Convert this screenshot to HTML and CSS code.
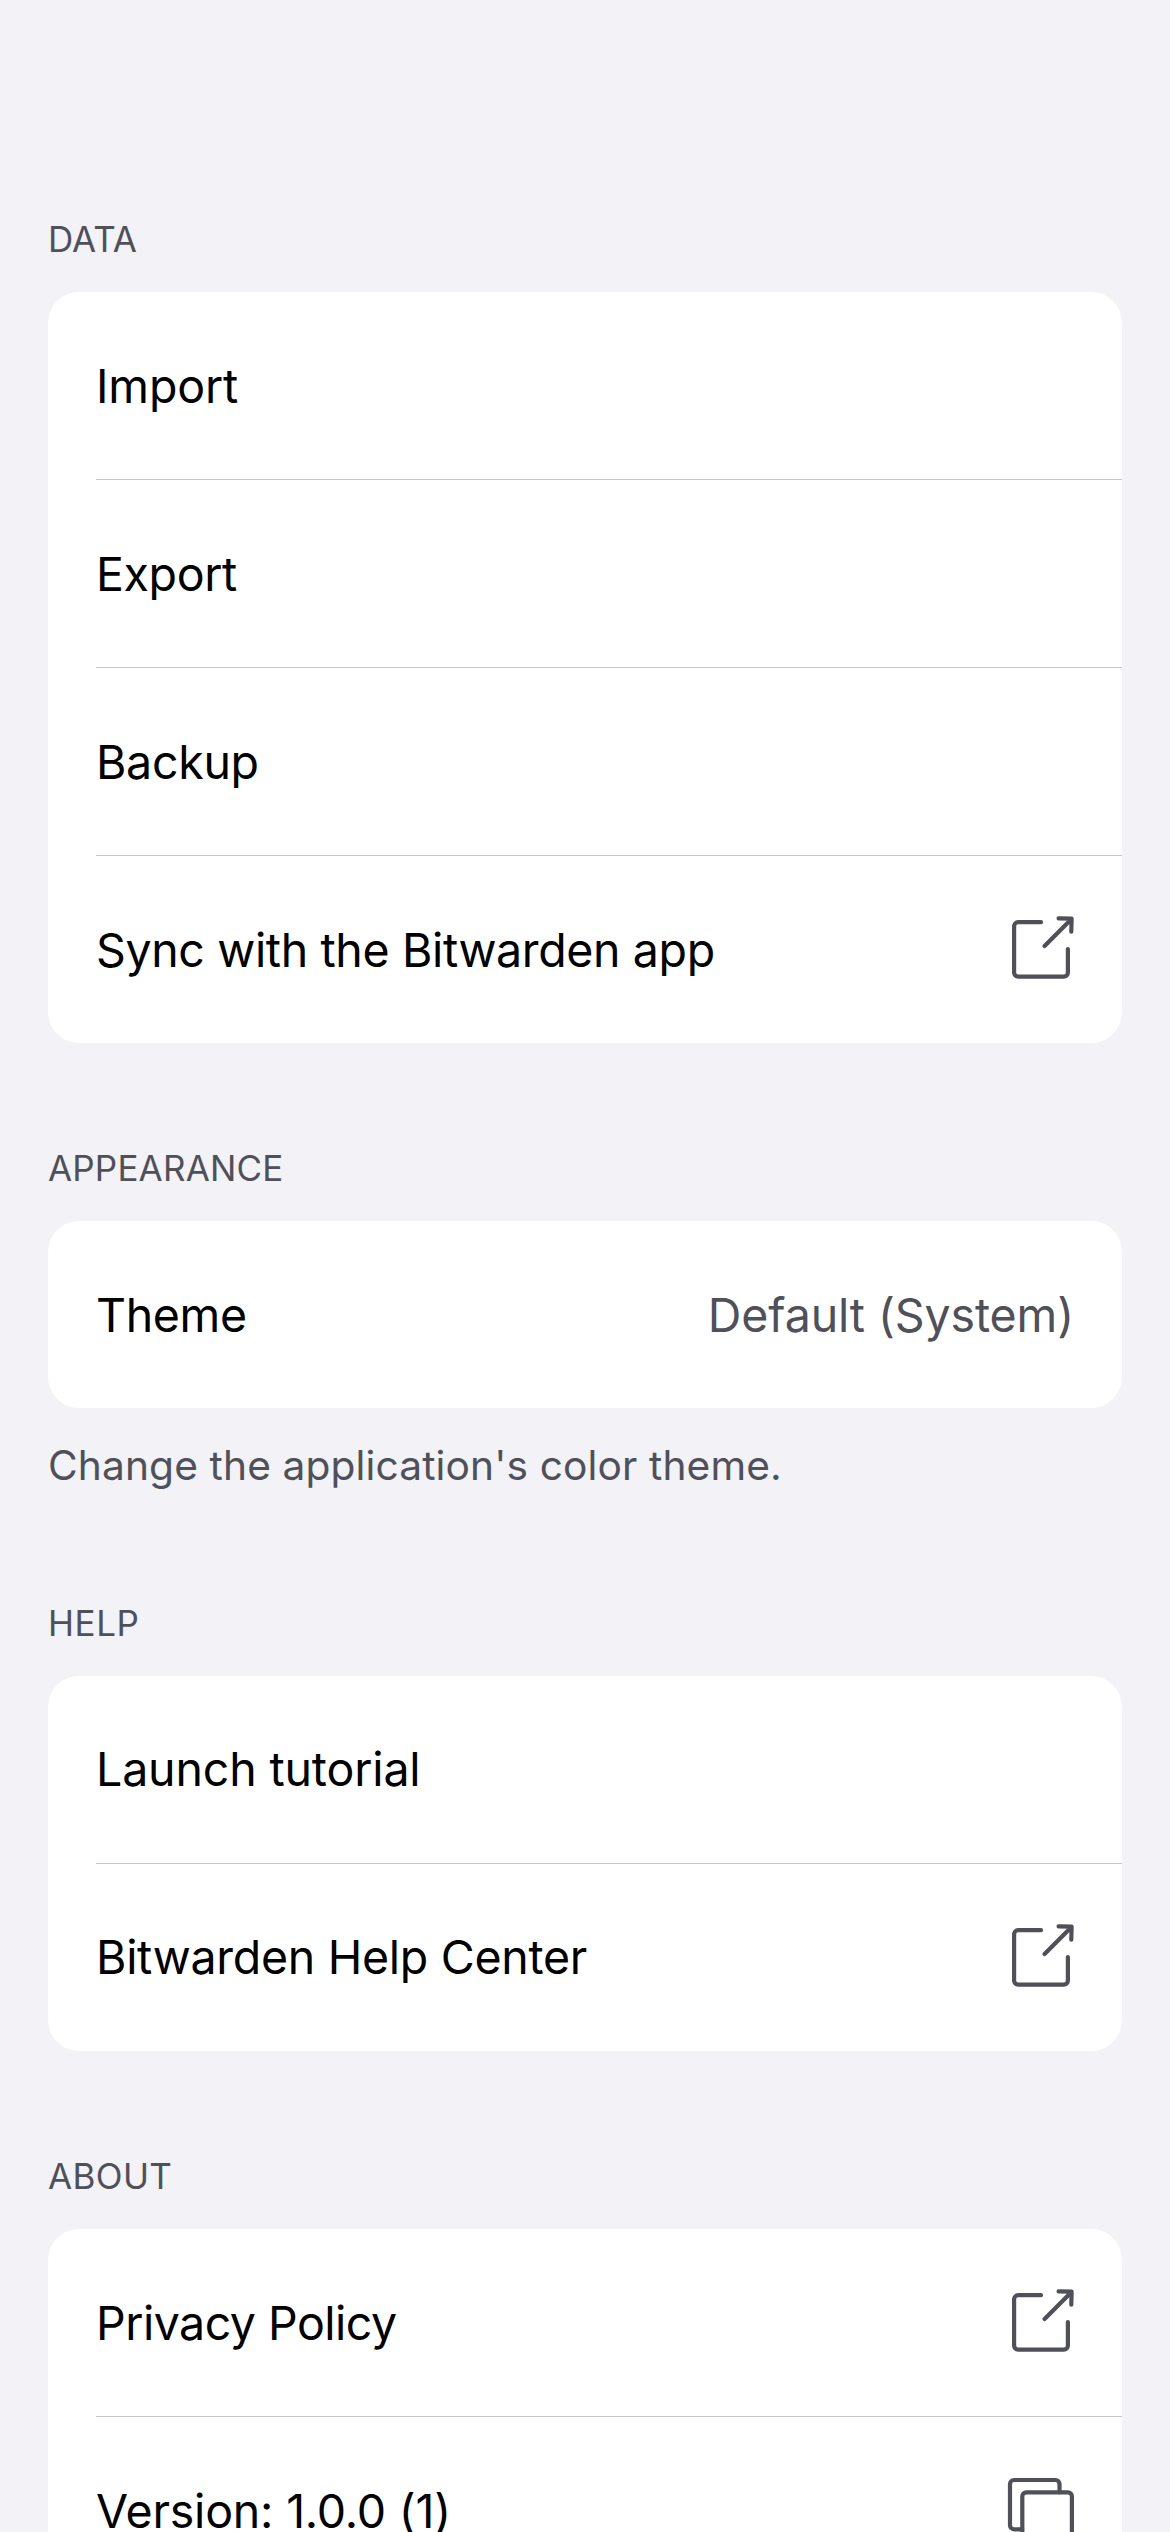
FILE: index.html
```html
<!DOCTYPE html>
<html lang="en">
<head>
<meta charset="utf-8">
<title>Settings</title>
<link rel="stylesheet" href="styles.css">
</head>
<body>
<svg class="defs" width="0" height="0" aria-hidden="true">
  <symbol id="external" viewBox="0 0 64 65" overflow="visible"><path d="M31 5.2H8.1a4 4 0 0 0-4 4v46.4a4 4 0 0 0 4 4h45.8a4 4 0 0 0 4-4V32M34.6 29 60.5 3M48.6 1.4 61.6 1.7 61.3 14.7"/></symbol>
  <symbol id="copy" viewBox="0 0 66 65" overflow="visible"><rect x="14.3" y="14.3" width="49.6" height="49.6" rx="4"/><path d="M14.3 51.3H6a4 4 0 0 1-4-4V6a4 4 0 0 1 4-4h41.5a4 4 0 0 1 4 4v8.3"/></symbol>
</svg>
<main class="settings">
  <section class="group">
    <h2 class="heading t-data">DATA</h2>
    <div class="card">
      <div class="row"><span class="t-import">Import</span></div>
      <div class="row"><span class="t-export">Export</span></div>
      <div class="row"><span class="t-backup">Backup</span></div>
      <div class="row"><span class="t-sync">Sync with the Bitwarden app</span><svg class="icon external"><use href="#external"/></svg></div>
    </div>
  </section>
  <section class="group">
    <h2 class="heading t-appearance">APPEARANCE</h2>
    <div class="card">
      <div class="row"><span class="t-theme">Theme</span><span class="value">Default (System)</span></div>
    </div>
    <p class="note">Change the application's color theme.</p>
  </section>
  <section class="group help">
    <h2 class="heading t-help">HELP</h2>
    <div class="card">
      <div class="row"><span class="t-launch">Launch tutorial</span></div>
      <div class="row"><span class="t-center">Bitwarden Help Center</span><svg class="icon external"><use href="#external"/></svg></div>
    </div>
  </section>
  <section class="group">
    <h2 class="heading t-about">ABOUT</h2>
    <div class="card">
      <div class="row"><span class="t-privacy">Privacy Policy</span><svg class="icon external"><use href="#external"/></svg></div>
      <div class="row"><span class="t-version">Version: 1.0.0 (1)</span><svg class="icon copy"><use href="#copy"/></svg></div>
    </div>
  </section>
</main>
</body>
</html>
```
FILE: styles.css
```css
* { box-sizing: border-box; }
body {
  margin: 0;
  height: 2532px;
  overflow: hidden;
  background: #f2f2f7;
  color: #000;
  font-family: Inter, "Liberation Sans", sans-serif;
}
.defs { display: block; position: absolute; }
.settings { padding: 215px 48px 0; }
.group { margin-bottom: 101px; }
.heading {
  margin: 0 0 29px;
  font-size: 35px;
  line-height: 48px;
  font-weight: 400;
  color: #505059;
}
.card { background: #fff; border-radius: 31px; padding-left: 48px; }
.row {
  height: 187px;
  display: flex;
  align-items: center;
  justify-content: space-between;
  padding-right: 48px;
  font-size: 46.5px;
  line-height: 60px;
  white-space: nowrap;
}
.row + .row { height: 188px; border-top: 1px solid #c6c6c8; }
.row span { padding-top: 1px; }
.help .row span { padding: 0 0 1px; }
.value { color: #505059; letter-spacing: -0.118px; }
.note {
  margin: 28px 0 0;
  padding-bottom: 3px;
  font-size: 40.7px;
  line-height: 59px;
  letter-spacing: 0.111px;
  color: #505059;
}
.icon {
  flex: none;
  overflow: visible;
  fill: none;
  stroke: #505059;
  stroke-width: 4.2;
  stroke-linecap: round;
  stroke-linejoin: round;
}
.external { width: 64px; height: 65px; }
.copy { width: 66px; height: 65px; }

/* Per-label tracking */
.t-data { letter-spacing: -0.052px; }
.t-import { letter-spacing: -0.161px; }
.t-export { letter-spacing: -0.384px; }
.t-backup { letter-spacing: -0.303px; }
.t-sync { letter-spacing: -0.368px; }
.t-appearance { letter-spacing: 0.183px; }
.t-theme { letter-spacing: -0.339px; }
.t-help { letter-spacing: 0.554px; }
.t-launch { letter-spacing: -0.15px; }
.t-center { letter-spacing: -0.29px; }
.t-about { letter-spacing: 0.361px; }
.t-privacy { letter-spacing: -0.507px; }
.t-version { letter-spacing: -0.203px; }
```
